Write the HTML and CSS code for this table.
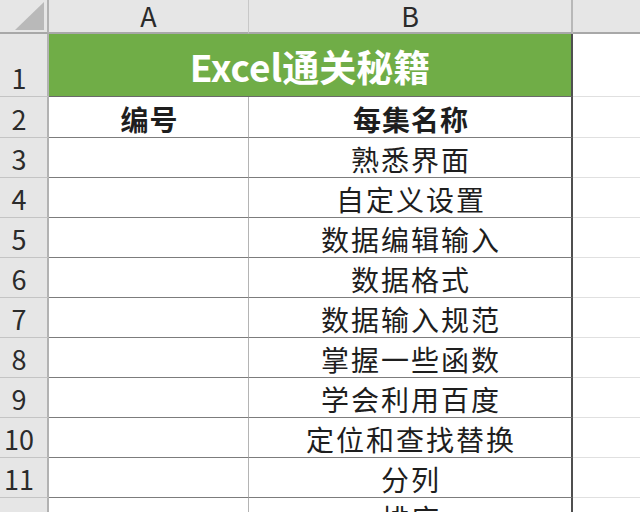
FILE: index.html
```html
<!DOCTYPE html>
<html lang="zh-CN">
<head>
<meta charset="utf-8">
<title>Excel通关秘籍</title>
<link rel="stylesheet" href="styles.css">
</head>
<body>
<div class="sheet">
  <div class="corner"><svg class="tri" width="49" height="34" viewBox="0 0 49 34"><polygon points="44,2 44,30 15,30" fill="#b9b9b9"/></svg></div>
  <div class="colhdr">A</div>
  <div class="colhdr colb">B</div>
  <div class="colhdr colc"></div>

  <div class="rowhdr tall">1</div>
  <div class="title">Excel通关秘籍</div>
  <div class="cellc tallc"></div>

  <div class="rowhdr">2</div>
  <div class="cella bold">编号</div>
  <div class="cellb bold">每集名称</div>
  <div class="cellc"></div>

  <div class="rowhdr">3</div><div class="cella"></div><div class="cellb">熟悉界面</div><div class="cellc"></div>
  <div class="rowhdr">4</div><div class="cella"></div><div class="cellb">自定义设置</div><div class="cellc"></div>
  <div class="rowhdr">5</div><div class="cella"></div><div class="cellb">数据编辑输入</div><div class="cellc"></div>
  <div class="rowhdr">6</div><div class="cella"></div><div class="cellb">数据格式</div><div class="cellc"></div>
  <div class="rowhdr">7</div><div class="cella"></div><div class="cellb">数据输入规范</div><div class="cellc"></div>
  <div class="rowhdr">8</div><div class="cella"></div><div class="cellb">掌握一些函数</div><div class="cellc"></div>
  <div class="rowhdr">9</div><div class="cella"></div><div class="cellb">学会利用百度</div><div class="cellc"></div>
  <div class="rowhdr">10</div><div class="cella"></div><div class="cellb">定位和查找替换</div><div class="cellc"></div>
  <div class="rowhdr">11</div><div class="cella"></div><div class="cellb">分列</div><div class="cellc"></div>
  <div class="rowhdr"></div><div class="cella"></div><div class="cellb last">排序</div><div class="cellc"></div>
</div>
</body>
</html>
```
FILE: styles.css
```css
html, body {
  margin: 0;
  padding: 0;
  background: #ffffff;
  overflow: hidden;
}
body {
  width: 640px;
  height: 512px;
  font-family: "Noto Sans CJK SC", "Noto Sans", sans-serif;
  color: #1e1e1e;
}
.sheet {
  display: grid;
  grid-template-columns: 49px 200px 324px 1fr;
  grid-template-rows: 34px 63px 41px repeat(10, 40px);
}
.sheet > div {
  box-sizing: border-box;
}
.corner {
  background: #e6e6e6;
  border-right: 2px solid #b2b2b2;
  border-bottom: 2px solid #a8a8a8;
}
.tri {
  display: block;
}
.colhdr {
  background: #e6e6e6;
  border-right: 1px solid #c8c8c8;
  border-bottom: 2px solid #a8a8a8;
  font-size: 27px;
  line-height: 32px;
  text-align: center;
  color: #2b2b2b;
}
.colb {
  border-right: 2px solid #b8b8b8;
}
.colc {
  border-right: none;
}
.rowhdr {
  background: #e6e6e6;
  border-right: 2px solid #b2b2b2;
  border-bottom: 1px solid #c4c4c4;
  font-size: 27px;
  line-height: 28px;
  color: #2b2b2b;
  display: flex;
  align-items: flex-end;
  justify-content: center;
  padding-right: 9px;
  padding-bottom: 4px;
}
.title {
  grid-column: 2 / 4;
  background: #70ad47;
  border-right: 2px solid #4f4f4f;
  border-bottom: 1px solid #6a6a6a;
  color: #ffffff;
  font-weight: 700;
  font-size: 37px;
  display: flex;
  align-items: center;
  justify-content: center;
  padding-top: 2px;
}
.cella, .cellb {
  border-bottom: 1px solid #7c7c7c;
  font-size: 28px;
  line-height: 28px;
  letter-spacing: 2px;
  display: flex;
  align-items: flex-end;
  justify-content: center;
  padding-bottom: 4px;
  padding-left: 2px;
  white-space: nowrap;
}
.cella {
  border-right: 1px solid #b4b4b4;
}
.cellb {
  border-right: 2px solid #4f4f4f;
}
.bold {
  font-weight: 700;
  letter-spacing: 1px;
}
.last {
  align-items: flex-start;
  padding-top: 6px;
  padding-bottom: 0;
}
.cellc {
  border-bottom: 1px solid #e0e0e0;
}
```
